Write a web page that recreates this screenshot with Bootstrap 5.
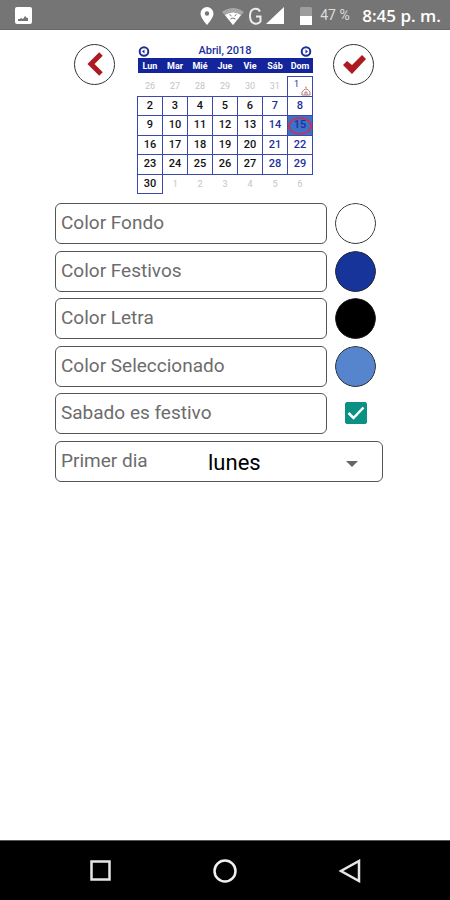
<!DOCTYPE html>
<html lang="es">
<head>
<meta charset="utf-8">
<meta name="viewport" content="width=device-width, initial-scale=1">
<title>Calendario</title>
<link href="https://cdn.jsdelivr.net/npm/bootstrap@5.3.0/dist/css/bootstrap.min.css" rel="stylesheet">
<style>
body{font-family:Roboto,"Liberation Sans",sans-serif;background:#fff}
.status{height:30px;background:#757575;color:#fff;padding:2px 9px 0 15px;border-bottom:1px solid #696969}
.pct{font-size:14px;color:#ddd;width:42px}
.clock{font:600 17px/24px "Open Sans","Noto Sans",sans-serif}
.round{width:41px;height:41px;border:1px solid #333;border-radius:50%;background:#fff}
.top{padding:14px 76px 0 74px}
.cal{width:176px;color:#1c2f9e;font-size:11px;margin-left:2px}
.cal-title{height:14px;line-height:14px;font-weight:500}
.month{width:176px;table-layout:fixed;border-collapse:collapse;text-align:center;line-height:12px}
.month th{background:#14259b;color:#fff;font-size:9px;height:15px;font-weight:700}
.month tbody::before{content:"";display:block;height:3px}
.month td{height:20px;border:1px solid #3a49ab;color:#111;font-weight:500}
.month tr:nth-child(even) td{height:19px}
.month td.out{border:0;color:#c4c4c4;font-size:9px;font-weight:400}
.month td.fest{color:#1c2f9e}
.month td.first{font-size:9px;font-weight:400;line-height:9px;vertical-align:top;padding-right:8px;padding-top:3px}
.month td.sel{background:#3f6fc6}
.ring{left:0;top:1px}
.bell{right:1px;bottom:0}
.opts{padding:9px 67px 0 55px}
.opt{margin-bottom:6px}
.opt:nth-child(odd){margin-bottom:7px}
.field{height:41px;border:1px solid #555;border-radius:6px;padding:0 5px;font-size:19px;color:#6c6c6c}
.short{margin-right:7px}
.swatch{appearance:none;width:41px;height:41px;padding:0;border:0;border-radius:50%;background:none}
.swatch::-webkit-color-swatch-wrapper{padding:0}
.swatch::-webkit-color-swatch{border:1px solid #222;border-radius:50%}
.tickbox{width:41px}
.tickbox .form-check-input{width:22px;height:22px;border-radius:2px;margin:0}
.tickbox .form-check-input:checked{background-color:#0b9184;border-color:#0b9184;background-image:url("data:image/svg+xml,%3Csvg xmlns='http://www.w3.org/2000/svg' viewBox='0 0 20 20'%3E%3Cpath d='M2.500 10l5 5 10-10.500' fill='none' stroke='white' stroke-width='2.500'/%3E%3C/svg%3E")}
.day-select{appearance:none;border:0;background:none;color:#000;font-size:22px;padding:3px 0 0}
.primer{width:147px}
.arrow{right:24px;top:19px}
.navkeys{height:60px;background:#000;border-top:1px solid #555}
.navkeys button{width:125px}
</style>
</head>
<body class="d-flex flex-column min-vh-100">
<header class="status d-flex align-items-center">
<svg class="me-auto" width="17" height="17" viewBox="0 0 17 17"><rect width="17" height="17" rx="2" fill="#fff"/><path d="M3 14v-2h2l1-1 2 1 2-3 2 2h1v3z" fill="#757575"/></svg>
<svg class="me-2" width="14" height="18" viewBox="0 0 14 18"><path fill="#fff" fill-rule="evenodd" d="M7 0a6.500 6.500 0 0 0-6.500 6.500C.5 11 7 18 7 18s6.500-7 6.500-11.500A6.500 6.500 0 0 0 7 0zm0 4.300a2.200 2.200 0 1 1 0 4.400 2.200 2.200 0 0 1 0-4.400z"/></svg>
<svg class="me-1" width="22" height="18" viewBox="0 0 22 18"><path d="M0 5Q11-3 22 5L11 18z" fill="#a6a6a6"/><path d="M3 8Q11 3 19 8L11 18z" fill="#fff"/><path d="M7.500 7.500l2 1.500M14.500 7.500l-2 1.500M8.500 12q2.500-2 5 0" fill="none" stroke="#757575"/></svg>
<svg class="me-1" width="14" height="18" viewBox="0 0 14 18"><path d="M12 4.500C10 .5 2 0 2 9s8 9 10.500 5.500V9.500H8" fill="none" stroke="#eee" stroke-width="2"/></svg>
<svg class="me-3" width="18" height="18" viewBox="0 0 18 18"><path d="M18 0v17H0z" fill="#fff"/></svg>
<svg class="me-2" width="12" height="18" viewBox="0 0 12 18"><path d="M1 0h10l1 1v9H0V1z" fill="#9d9d9d"/><path d="M0 9h12v9H0z" fill="#fff"/></svg>
<span class="pct">47 %</span>
<span class="clock">8:45 p. m.</span>
</header>
<main class="flex-grow-1">
<section class="top d-flex justify-content-between align-items-start">
<button class="round p-0 d-flex" type="button" aria-label="Volver"><svg width="39" height="39" viewBox="0 0 39 39"><path d="M26 9L16 19l10 10" fill="none" stroke="#ad1a20" stroke-width="5"/></svg></button>
<div class="cal">
<div class="cal-title d-flex justify-content-between align-items-center">
<svg width="14" height="12" viewBox="0 0 14 12"><circle cx="7" cy="6.500" r="4.300" fill="none" stroke="#1c2f9e" stroke-width="2"/><path d="M5 6.500l2.500-2v4z" fill="#1c2f9e"/></svg>
<span>Abril, 2018</span>
<svg width="14" height="12" viewBox="0 0 14 12"><circle cx="7" cy="6.500" r="4.300" fill="none" stroke="#1c2f9e" stroke-width="2"/><path d="M9 6.500l-2.500-2v4z" fill="#1c2f9e"/></svg>
</div>
<table class="month">
<thead><tr><th>Lun</th><th>Mar</th><th>Mié</th><th>Jue</th><th>Vie</th><th>Sáb</th><th>Dom</th></tr></thead>
<tbody>
<tr><td class="out">26</td><td class="out">27</td><td class="out">28</td><td class="out">29</td><td class="out">30</td><td class="out">31</td><td class="fest first position-relative">1<svg class="bell position-absolute" width="10" height="10" viewBox="0 0 10 10"><circle cx="5" cy="1.500" r="1" fill="#e8a25c"/><path d="M1 9V6q4-6 8 0v3zM4 9V6h2v3" fill="none" stroke="#b08088"/></svg></td></tr>
<tr><td>2</td><td>3</td><td>4</td><td>5</td><td>6</td><td class="fest">7</td><td class="fest">8</td></tr>
<tr><td>9</td><td>10</td><td>11</td><td>12</td><td>13</td><td class="fest">14</td><td class="fest sel position-relative">15<svg class="ring position-absolute" width="24" height="18" viewBox="0 0 24 18"><ellipse cx="12" cy="9" rx="11" ry="8" fill="none" stroke="#cf2f4a" stroke-width="1.500"/></svg></td></tr>
<tr><td>16</td><td>17</td><td>18</td><td>19</td><td>20</td><td class="fest">21</td><td class="fest">22</td></tr>
<tr><td>23</td><td>24</td><td>25</td><td>26</td><td>27</td><td class="fest">28</td><td class="fest">29</td></tr>
<tr><td>30</td><td class="out">1</td><td class="out">2</td><td class="out">3</td><td class="out">4</td><td class="out">5</td><td class="out">6</td></tr>
</tbody>
</table>
</div>
<button class="round p-0 d-flex" type="button" aria-label="Aceptar"><svg width="39" height="39" viewBox="0 0 39 39"><path d="M9 20l4-4 5 4 10-10 4 4-14 15z" fill="#ad1a20"/></svg></button>
</section>
<form class="opts">
<div class="opt short d-flex gap-2"><label class="field flex-grow-1 d-flex align-items-center" for="fondo">Color Fondo</label><input class="swatch" type="color" id="fondo" value="#ffffff"></div>
<div class="opt short d-flex gap-2"><label class="field flex-grow-1 d-flex align-items-center" for="festivos">Color Festivos</label><input class="swatch" type="color" id="festivos" value="#17349a"></div>
<div class="opt short d-flex gap-2"><label class="field flex-grow-1 d-flex align-items-center" for="letra">Color Letra</label><input class="swatch" type="color" id="letra" value="#000000"></div>
<div class="opt short d-flex gap-2"><label class="field flex-grow-1 d-flex align-items-center" for="selec">Color Seleccionado</label><input class="swatch" type="color" id="selec" value="#5685cd"></div>
<div class="opt short d-flex gap-2"><label class="field flex-grow-1 d-flex align-items-center" for="sabado">Sabado es festivo</label><div class="tickbox d-flex align-items-center justify-content-center"><input class="form-check-input" type="checkbox" id="sabado" checked></div></div>
<div class="opt field d-flex align-items-center position-relative"><label class="primer" for="primer">Primer dia</label><select class="day-select flex-grow-1" id="primer"><option>lunes</option><option>martes</option><option>domingo</option></select><svg class="arrow position-absolute pe-none" width="12" height="6" viewBox="0 0 12 6"><path d="M0 0h12L6 6z" fill="#666"/></svg></div>
</form>
</main>
<footer class="navkeys d-flex justify-content-center align-items-center">
<button class="btn p-0" type="button" aria-label="Recientes"><svg width="24" height="24" viewBox="0 0 24 24"><rect x="3.500" y="2.500" width="18" height="18" fill="none" stroke="#e6e6e6" stroke-width="2.500"/></svg></button>
<button class="btn p-0" type="button" aria-label="Inicio"><svg width="24" height="24" viewBox="0 0 24 24"><circle cx="12" cy="12" r="10.500" fill="none" stroke="#f0f0f0" stroke-width="2.500"/></svg></button>
<button class="btn p-0" type="button" aria-label="Atrás"><svg width="24" height="24" viewBox="0 0 24 24"><path d="M21 2v20L3 12z" fill="none" stroke="#e6e6e6" stroke-width="2.500"/></svg></button>
</footer>
<script src="https://cdn.jsdelivr.net/npm/bootstrap@5.3.0/dist/js/bootstrap.bundle.min.js"></script>
</body>
</html>
